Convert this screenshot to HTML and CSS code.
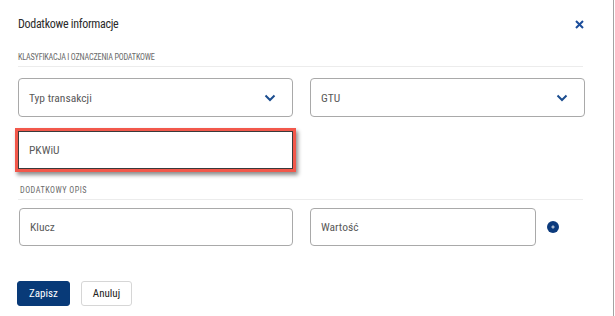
FILE: index.html
```html
<!DOCTYPE html>
<html lang="pl">
<head>
    <meta charset="UTF-8">
    <meta name="viewport" content="width=device-width, initial-scale=1.0">
    <title>Dodatkowe informacje</title>
    <link rel="stylesheet" href="styles.css">
</head>
<body>
    <div class="modal">
        <div class="modal-header">
            <h2>Dodatkowe informacje</h2>
            <button class="close" aria-label="Zamknij">
                <svg width="9" height="9" viewBox="0 0 9 9"><path d="M1 1L8 8M8 1L1 8" stroke="#1b4d9b" stroke-width="2" fill="none"/></svg>
            </button>
        </div>

        <div class="section-label">Klasyfikacja i oznaczenia podatkowe</div>
        <div class="fields">
            <div class="field select">
                <span>Typ transakcji</span>
                <svg class="chevron" width="12" height="8" viewBox="0 0 12 8"><path d="M1.5 1.5L6 6L10.5 1.5" stroke="#1b4d8f" stroke-width="2" fill="none"/></svg>
            </div>
            <div class="field select">
                <span>GTU</span>
                <svg class="chevron" width="12" height="8" viewBox="0 0 12 8"><path d="M1.5 1.5L6 6L10.5 1.5" stroke="#1b4d8f" stroke-width="2" fill="none"/></svg>
            </div>
            <div class="field highlight"><span>PKWiU</span></div>
        </div>

        <div class="section-label second">Dodatkowy opis</div>
        <div class="kv-row">
            <div class="field key"><span>Klucz</span></div>
            <div class="field value"><span>Wartość</span></div>
            <button class="add" aria-label="Dodaj">
                <svg width="12" height="12" viewBox="0 0 12 12"><circle cx="6" cy="6" r="6" fill="#0c3a7c"/><path d="M6 4.3V7.7M4.3 6H7.7" stroke="#fff" stroke-width="0.8"/></svg>
            </button>
        </div>

        <div class="actions">
            <button class="btn primary">Zapisz</button>
            <button class="btn">Anuluj</button>
        </div>
    </div>
</body>
</html>
```

FILE: styles.css
```css
body {
    margin: 0;
    background: #fff;
    font-family: "Liberation Sans Narrow", "Roboto Condensed", Roboto, sans-serif;
    color: #333;
}
.modal {
    width: 614px;
    height: 316px;
    box-sizing: border-box;
    border-right: 1px solid #a3a3a3;
    padding: 15px 30px 0 18px;
}
.modal-header {
    display: flex;
    justify-content: space-between;
    align-items: center;
    height: 18px;
}
.modal-header h2 {
    margin: 0;
    font-size: 12px;
    font-weight: normal;
    letter-spacing: -0.3px;
    color: #2b2b2b;
}
.close {
    border: none;
    background: none;
    padding: 0;
    margin-right: -1px;
    display: flex;
}
.section-label {
    margin-top: 19px;
    font-size: 8.2px;
    line-height: 10px;
    letter-spacing: -0.2px;
    text-transform: uppercase;
    color: #6a6a6a;
    padding-bottom: 4px;
    border-bottom: 1px solid #ececec;
}
.section-label.second {
    margin-top: 16px;
    padding-left: 2px;
    letter-spacing: 0.5px;
}
.fields {
    margin-top: 11px;
    display: grid;
    grid-template-columns: 275px 275px;
    column-gap: 17px;
    row-gap: 13px;
}
.field {
    box-sizing: border-box;
    height: 39px;
    border: 1px solid #a9a9a9;
    border-radius: 4px;
    display: flex;
    align-items: center;
    justify-content: space-between;
    padding: 0 11px 0 10px;
    font-size: 11.5px;
    color: #5a5a5a;
}
.chevron {
    margin-right: 5px;
}
.highlight {
    border: 1px solid #3a3a3a;
    border-radius: 0;
    outline: 3px solid #f2584b;
    outline-offset: 0;
    box-shadow: 2px 3px 4px 3px rgba(0, 0, 0, 0.45);
    height: 38px;
    margin-top: 1px;
}
.kv-row {
    margin-top: 8px;
    display: flex;
    align-items: center;
    gap: 17px;
}
.kv-row .field {
    height: 38px;
}
.key {
    margin-left: 1px;
    width: 274px;
}
.value {
    width: 226px;
}
.add {
    border: none;
    background: none;
    padding: 0;
    margin-left: -6px;
    display: flex;
}
.actions {
    margin-top: 35px;
    display: flex;
    gap: 11px;
}
.btn {
    height: 25px;
    padding: 0 11px;
    border: 1px solid #d6d6d6;
    border-radius: 3px;
    background: #fff;
    font-family: inherit;
    font-size: 11px;
    color: #222;
}
.btn.primary {
    background: #083a78;
    border-color: #083a78;
    color: #fff;
    margin-left: -1px;
}
```
